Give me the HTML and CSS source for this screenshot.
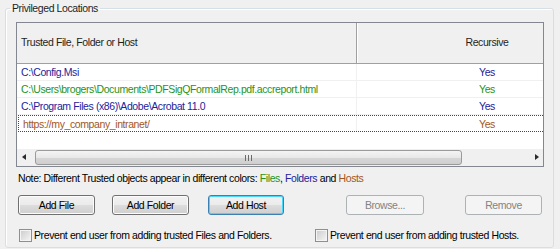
FILE: index.html
```html
<!DOCTYPE html>
<html lang="en">
<head>
    <meta charset="UTF-8">
    <title>Privileged Locations</title>
    <link rel="stylesheet" href="styles.css">
</head>
<body>
    <fieldset class="group">
        <legend>Privileged Locations</legend>
        <div class="list">
            <div class="list-view">
                <div class="row head">
                    <div class="cell name">Trusted File, Folder or Host</div>
                    <div class="cell rec">Recursive</div>
                </div>
                <div class="row folder">
                    <div class="cell name">C:\Config.Msi</div>
                    <div class="cell rec">Yes</div>
                </div>
                <div class="row file">
                    <div class="cell name">C:\Users\brogers\Documents\PDFSigQFormalRep.pdf.accreport.html</div>
                    <div class="cell rec">Yes</div>
                </div>
                <div class="row folder">
                    <div class="cell name">C:\Program Files (x86)\Adobe\Acrobat 11.0</div>
                    <div class="cell rec">Yes</div>
                </div>
                <div class="row host focus">
                    <div class="cell name">https://my_company_intranet/</div>
                    <div class="cell rec">Yes</div>
                </div>
            </div>
            <div class="hscroll">
                <span class="arrow left"></span>
                <div class="track">
                    <div class="thumb"><span class="grip"></span></div>
                </div>
                <span class="arrow right"></span>
            </div>
        </div>
        <p class="note">Note: Different Trusted objects appear in different colors: <span class="c-file">Files</span>, <span class="c-folder">Folders</span> and <span class="c-host">Hosts</span></p>
        <div class="buttons">
            <button type="button" class="btn">Add File</button>
            <button type="button" class="btn btn-folder">Add Folder</button>
            <button type="button" class="btn btn-host default">Add Host</button>
            <button type="button" class="btn btn-browse" disabled>Browse...</button>
            <button type="button" class="btn btn-remove" disabled>Remove</button>
        </div>
        <div class="checks">
            <label class="check"><span class="box"></span>Prevent end user from adding trusted Files and Folders.</label>
            <label class="check"><span class="box"></span>Prevent end user from adding trusted Hosts.</label>
        </div>
    </fieldset>
</body>
</html>
```

FILE: styles.css
```css
body {
    margin: 0;
    background-color: #f0f0f0;
    font-family: "Liberation Sans", Arial, sans-serif;
    font-size: 10.5px;
    letter-spacing: -0.4px;
    line-height: 13px;
    color: #000;
}
.group {
    min-width: 0;
    margin: 2px 6px 0 5px;
    padding: 7px 9px 5px 10px;
    border: 1px solid #d5dfe5;
    border-radius: 3px;
    box-shadow: inset 1px 1px 0 #fff;
}
.group legend {
    margin-left: -6px;
    padding: 0 2px;
    color: #1e1e1e;
}
.list {
    border: 1px solid #828790;
    background-color: #fff;
}
.list-view {
    height: 126px;
    overflow: hidden;
}
.row {
    display: flex;
    width: 600px;
    height: 16px;
    border-bottom: 1px solid #f0f0f0;
    line-height: 17px;
}
.row.head {
    height: 40px;
    line-height: 38px;
    background-color: #f0f0f0;
    border-bottom: 1px solid #a0a0a0;
    color: #1e1e1e;
}
.cell {
    white-space: nowrap;
    overflow: hidden;
    flex: none;
}
.cell.name {
    width: 335px;
    padding-left: 4px;
    border-right: 1px solid #f0f0f0;
}
.head .cell.name {
    border-right: 1px solid #a0a0a0;
    box-shadow: 1px 0 0 #fff;
    overflow: visible;
}
.cell.rec {
    width: 260px;
    text-align: center;
}
.folder { color: #22229c; }
.file { color: #1e9420; }
.host { color: #a2561c; }
.row.focus {
    height: 15px;
    line-height: 17px;
    margin-left: 1px;
    border-top: 1px dotted #2e4a78;
    border-bottom: 1px dotted #2e4a78;
    border-left: 1px dotted #2e4a78;
}
.row.focus .cell.name {
    width: 333px;
}
.hscroll {
    display: flex;
    height: 17px;
    background-color: #f0f0f0;
}
.arrow {
    width: 17px;
    flex: none;
    position: relative;
}
.arrow::after {
    content: "";
    position: absolute;
    top: 5px;
    border-top: 3.5px solid transparent;
    border-bottom: 3.5px solid transparent;
}
.arrow.left::after {
    left: 5px;
    border-right: 4px solid #2a2a2a;
}
.arrow.right::after {
    left: 9px;
    border-left: 4px solid #2a2a2a;
}
.track {
    flex: 1;
    padding: 0 1px;
}
.thumb {
    width: 427px;
    height: 15px;
    border: 1px solid #9a9a9a;
    border-radius: 3px;
    background: linear-gradient(#f4f4f4, #e8e8e8 50%, #d6d6d6 51%, #cfcfcf);
    display: flex;
    justify-content: center;
    align-items: center;
    box-sizing: border-box;
    margin-top: 1px;
}
.grip {
    width: 7px;
    height: 6px;
    background: repeating-linear-gradient(90deg, #6a6a6a 0 1px, transparent 1px 3px);
}
.note {
    margin: 5px 0 0 2px;
}
.c-file { color: #1e9420; }
.c-folder { color: #22229c; }
.c-host { color: #a2561c; }
.buttons {
    display: flex;
    margin-top: 10px;
    padding-left: 2px;
}
.btn {
    width: 77px;
    height: 20px;
    padding: 0;
    border: 1px solid #707070;
    border-radius: 3px;
    background: linear-gradient(#f2f2f2, #ebebeb 50%, #dddddd 51%, #cfcfcf);
    box-shadow: inset 0 0 0 1px #fcfcfc;
    font-family: inherit;
    font-size: 10.5px;
    letter-spacing: -0.4px;
    color: #000;
}
.btn-folder { margin-left: 17px; }
.btn-host { margin-left: 19px; width: 76px; }
.btn-browse { margin-left: 62px; width: 78px; }
.btn-remove { margin-left: 41px; }
.btn.default {
    border-color: #3c7fb1;
    box-shadow: inset 0 0 0 1px #48d8fb;
}
.btn:disabled {
    border-color: #adb2b5;
    background: #f4f4f4;
    box-shadow: none;
    color: #838383;
}
.checks {
    display: grid;
    grid-template-columns: 296px auto;
    margin-top: 14px;
    padding-left: 3px;
}
.check {
    display: flex;
    align-items: center;
    height: 13px;
    white-space: nowrap;
}
.box {
    width: 13px;
    height: 13px;
    box-sizing: border-box;
    border: 1px solid #8e8f8f;
    background: linear-gradient(135deg, #cbcbcb, #f6f6f6);
    box-shadow: inset 0 0 0 1px #f4f4f4;
    margin-right: 2px;
    flex: none;
}
```
